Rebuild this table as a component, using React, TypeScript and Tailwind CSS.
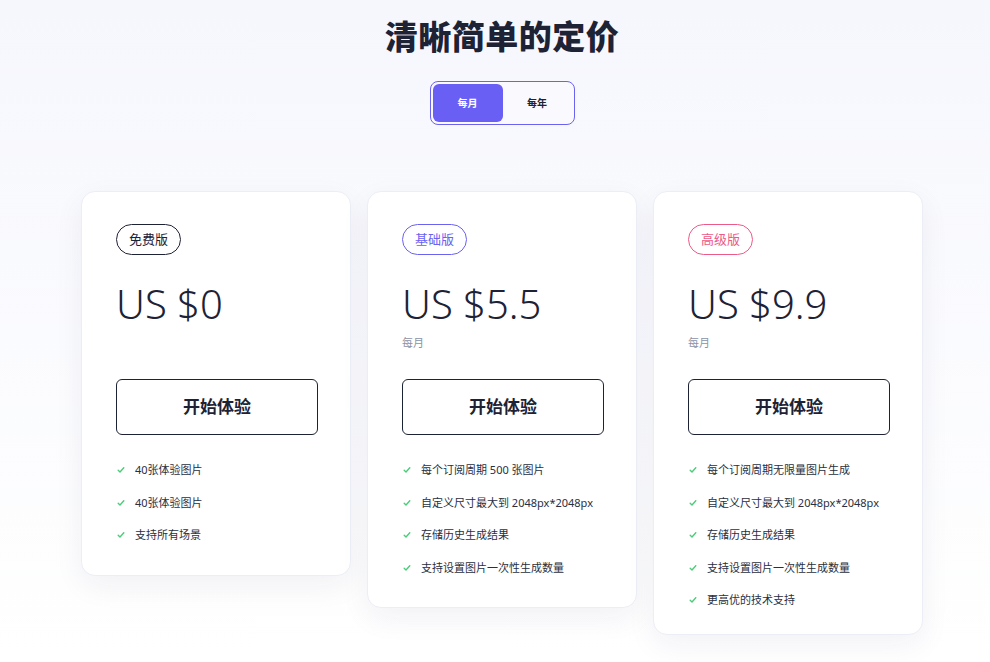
import { useState } from "react";

const FONT = { fontFamily: '"Noto Sans", "Noto Sans CJK SC", sans-serif' };

type Plan = {
  name: string;
  badge: string;
  price: string;
  period?: string;
  pad: string;
  features: string[];
};

const plans: Plan[] = [
  {
    name: "免费版",
    badge: "border-[#1e2235] text-[#1e2235]",
    price: "US $0",
    pad: "pb-[23px]",
    features: ["40张体验图片", "40张体验图片", "支持所有场景"],
  },
  {
    name: "基础版",
    badge: "border-[#6a62f0] text-[#6a62f0]",
    price: "US $5.5",
    period: "每月",
    pad: "pb-[23px]",
    features: [
      "每个订阅周期 500 张图片",
      "自定义尺寸最大到 2048px*2048px",
      "存储历史生成结果",
      "支持设置图片一次性生成数量",
    ],
  },
  {
    name: "高级版",
    badge: "border-[#ec5b87] text-[#ec5b87]",
    price: "US $9.9",
    period: "每月",
    pad: "pb-[17px]",
    features: [
      "每个订阅周期无限量图片生成",
      "自定义尺寸最大到 2048px*2048px",
      "存储历史生成结果",
      "支持设置图片一次性生成数量",
      "更高优的技术支持",
    ],
  },
];

function Check() {
  return (
    <svg width="8" height="8" viewBox="0 0 8 8" fill="none">
      <path d="M1.2 4.3 3 6 6.8 1.8" stroke="#4ccb7a" strokeWidth="1.4" strokeLinecap="round" strokeLinejoin="round" />
    </svg>
  );
}

function PlanCard({ plan }: { plan: Plan }) {
  return (
    <div
      className={`w-[270px] bg-white border border-[#eceef6] rounded-[14px] shadow-[0_10px_30px_rgba(30,34,80,0.06)] px-[34px] pt-[32px] ${plan.pad}`}
    >
      <span
        className={`inline-flex items-center h-[31px] px-[12px] rounded-full border text-[13px] ${plan.badge}`}
      >
        {plan.name}
      </span>
      <div className="mt-[23px] text-[40px] leading-[52px] font-light text-[#1e2235]">{plan.price}</div>
      <div className="h-[20px] mt-[5px] text-[11px] text-[#8b93a7]">{plan.period}</div>
      <button className="mt-[24px] w-[202px] h-[56px] rounded-[6px] border border-[#1e2235] text-[17px] font-bold text-[#1e2235] bg-white">
        开始体验
      </button>
      <ul className="mt-[19px] flex flex-col">
        {plan.features.map((f, i) => (
          <li key={i} className="flex items-center h-[32.5px] text-[11px] text-[#2a2f3f]">
            <span className="w-[19px] pl-[1px] flex items-center">
              <Check />
            </span>
            {f}
          </li>
        ))}
      </ul>
    </div>
  );
}

export default function App() {
  const [yearly, setYearly] = useState(false);

  return (
    <div style={FONT} className="min-h-[662px] pl-[14px] bg-gradient-to-b from-[#f6f7fd] to-white">
      <h1 className="pt-[14px] text-center text-[33px] leading-[46px] font-extrabold text-[#1e2235] tracking-[0.5px]">
        清晰简单的定价
      </h1>
      <div className="mt-[21px] flex justify-center">
        <div className="flex w-[145px] h-[44px] p-[2px] rounded-[8px] border border-[#6a62f0] bg-[#fafafe]">
          <button
            onClick={() => setYearly(false)}
            className={`w-[70px] rounded-[6px] text-[10px] font-bold ${
              !yearly ? "bg-[#6a5ff5] text-white" : "text-[#1e2235]"
            }`}
          >
            每月
          </button>
          <button
            onClick={() => setYearly(true)}
            className={`flex-1 rounded-[6px] text-[10px] font-bold ${
              yearly ? "bg-[#6a5ff5] text-white" : "text-[#1e2235]"
            }`}
          >
            每年
          </button>
        </div>
      </div>
      <div className="mt-[66px] flex justify-center items-start gap-[16px] pb-[22px]">
        {plans.map((p) => (
          <PlanCard key={p.name} plan={p} />
        ))}
      </div>
    </div>
  );
}
